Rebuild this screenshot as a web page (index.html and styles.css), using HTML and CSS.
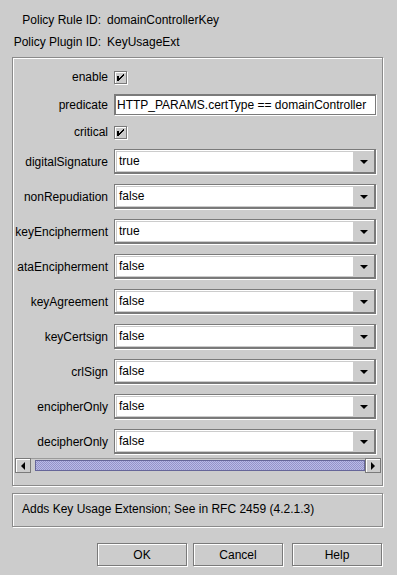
FILE: index.html
```html
<!DOCTYPE html>
<html lang="en">
<head>
    <meta charset="UTF-8">
    <title>Policy Rule Editor</title>
    <link rel="stylesheet" href="styles.css">
</head>
<body>
<div class="dialog">
    <div class="ids">
        <span class="id-label">Policy Rule ID:</span><span>domainControllerKey</span>
        <span class="id-label">Policy Plugin ID:</span><span>KeyUsageExt</span>
    </div>

    <div class="etched params">
        <div class="viewport">
            <div class="form">
                <label>enable</label>
                <span class="checkbox"><svg width="12" height="12" viewBox="0 0 12 12"><path d="M2 4h2v5h-2z M8 2h1v2h-1z M7 3h1v2h-1z M6 4h1v2h-1z M5 5h1v2h-1z M4 6h1v2h-1z"/></svg></span>

                <label>predicate</label>
                <div class="textfield">HTTP_PARAMS.certType == domainController</div>

                <label>critical</label>
                <span class="checkbox"><svg width="12" height="12" viewBox="0 0 12 12"><path d="M2 4h2v5h-2z M8 2h1v2h-1z M7 3h1v2h-1z M6 4h1v2h-1z M5 5h1v2h-1z M4 6h1v2h-1z"/></svg></span>

                <label>digitalSignature</label>
                <div class="combo"><div class="combo-value">true</div><div class="combo-arrow"></div></div>

                <label>nonRepudiation</label>
                <div class="combo"><div class="combo-value">false</div><div class="combo-arrow"></div></div>

                <label>keyEncipherment</label>
                <div class="combo"><div class="combo-value">true</div><div class="combo-arrow"></div></div>

                <label>ataEncipherment</label>
                <div class="combo"><div class="combo-value">false</div><div class="combo-arrow"></div></div>

                <label>keyAgreement</label>
                <div class="combo"><div class="combo-value">false</div><div class="combo-arrow"></div></div>

                <label>keyCertsign</label>
                <div class="combo"><div class="combo-value">false</div><div class="combo-arrow"></div></div>

                <label>crlSign</label>
                <div class="combo"><div class="combo-value">false</div><div class="combo-arrow"></div></div>

                <label>encipherOnly</label>
                <div class="combo"><div class="combo-value">false</div><div class="combo-arrow"></div></div>

                <label>decipherOnly</label>
                <div class="combo"><div class="combo-value">false</div><div class="combo-arrow"></div></div>
            </div>
        </div>
        <div class="hscroll">
            <div class="scroll-btn left"></div>
            <div class="scroll-track"><div class="scroll-thumb"></div></div>
            <div class="scroll-btn right"></div>
        </div>
    </div>

    <div class="etched description">Adds Key Usage Extension; See in RFC 2459 (4.2.1.3)</div>

    <div class="buttons">
        <button class="btn">OK</button>
        <button class="btn cancel">Cancel</button>
        <button class="btn help">Help</button>
    </div>
</div>
</body>
</html>
```

FILE: styles.css
```css
body {
    margin: 0;
    background: #cccccc;
    font-family: "Liberation Sans", Arial, sans-serif;
    font-size: 12px;
    color: #000;
}
.dialog {
    width: 397px;
    height: 575px;
    padding: 9px 0 0 12px;
    box-sizing: border-box;
}

/* header ids */
.ids {
    display: grid;
    grid-template-columns: 89px auto;
    grid-auto-rows: 22px;
    column-gap: 6px;
    align-items: center;
}
.id-label { text-align: right; }

/* etched border like swing */
.etched {
    box-sizing: border-box;
    width: 371px;
    border: 1px solid #8a8a8a;
    box-shadow: inset 1px 1px 0 #fff, 1px 1px 0 #fff;
}
.params {
    margin-top: 4px;
    height: 429px;
    padding: 1px 0 0 2px;
}
.viewport {
    height: 399px;
    overflow: hidden;
}
.form {
    display: grid;
    grid-template-columns: 93px 262px;
    column-gap: 6px;
    row-gap: 10px;
    align-items: center;
    padding-top: 11px;
}
.form label {
    text-align: right;
    white-space: nowrap;
}

.checkbox {
    width: 12px;
    height: 12px;
    border: 1px solid #7a7a7a;
    border-width: 1px 0 0 1px;
    box-shadow: 1px 1px 0 #fff, inset 1px 1px 0 #fff;
    outline: 0;
    display: block;
    position: relative;
}
.checkbox svg {
    display: block;
    shape-rendering: crispEdges;
}
.checkbox::after {
    content: "";
    position: absolute;
    right: 0;
    bottom: 0;
    width: 11px;
    height: 11px;
    border-right: 1px solid #7a7a7a;
    border-bottom: 1px solid #7a7a7a;
    pointer-events: none;
}

.textfield {
    box-sizing: border-box;
    height: 21px;
    width: 262px;
    background: #fff;
    border: 1px solid #7a7a7a;
    border-top-width: 2px;
    border-left-width: 2px;
    box-shadow: 1px 1px 0 #fff;
    padding-left: 1px;
    line-height: 18px;
    white-space: nowrap;
    overflow: hidden;
}

.combo {
    box-sizing: border-box;
    display: flex;
    width: 262px;
    height: 25px;
    border: 1px solid #7a7a7a;
    border-right-width: 2px;
    border-bottom-width: 2px;
    box-shadow: inset 1px 1px 0 #fff, 1px 1px 0 #fff;
    padding: 2px 0 1px 2px;
}
.combo-value {
    flex: 1;
    background: #fff;
    padding-left: 2px;
    line-height: 19px;
}
.combo-arrow {
    width: 21px;
    display: flex;
    align-items: center;
    justify-content: center;
}
.combo-arrow::before {
    content: "";
    border-left: 4px solid transparent;
    border-right: 4px solid transparent;
    border-top: 4px solid #000;
}

/* horizontal scrollbar */
.hscroll {
    display: flex;
    width: 366px;
    height: 15px;
}
.scroll-btn {
    box-sizing: border-box;
    width: 16px;
    border: 1px solid #7a7a7a;
    box-shadow: inset 1px 1px 0 #fff;
    display: flex;
    align-items: center;
    justify-content: center;
}
.scroll-btn.left::before {
    content: "";
    border-top: 4px solid transparent;
    border-bottom: 4px solid transparent;
    border-right: 4px solid #000;
}
.scroll-btn.right::before {
    content: "";
    border-top: 4px solid transparent;
    border-bottom: 4px solid transparent;
    border-left: 4px solid #000;
}
.scroll-track {
    flex: 1;
    padding: 1px 0 2px 4px;
    border-top: 1px solid #9a9a9a;
}
.scroll-thumb {
    height: 100%;
    box-sizing: border-box;
    border: 1px solid #666699;
    background: repeating-conic-gradient(#9393c9 0 25%, #babae6 0 50%) 0 0 / 2px 2px;
}

.description {
    margin-top: 7px;
    height: 34px;
    padding-left: 9px;
    line-height: 31px;
}

.buttons {
    display: flex;
    margin-top: 16px;
    padding-left: 85px;
}
.btn {
    box-sizing: border-box;
    width: 90px;
    height: 23px;
    font: inherit;
    color: #000;
    background: #cccccc;
    border: 1px solid #7a7a7a;
    box-shadow: inset 1px 1px 0 #fff, 1px 1px 0 #fff;
    padding: 0;
}
.cancel { margin-left: 6px; }
.help { margin-left: 9px; }
```
